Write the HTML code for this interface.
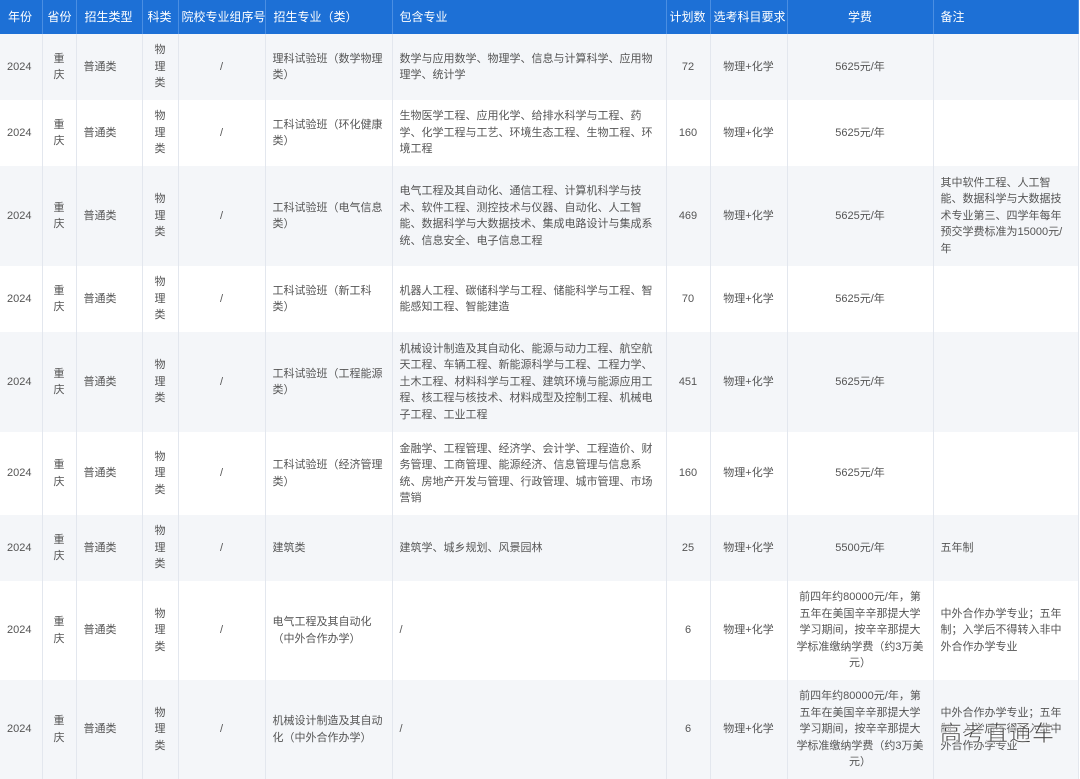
<!DOCTYPE html>
<html><head><meta charset="utf-8"><style>
html,body{margin:0;padding:0;background:#fff;width:1080px;height:771px;overflow:hidden}
body{font-family:"Liberation Sans","Noto Sans CJK SC",sans-serif;font-size:11px;color:#555}
table{border-collapse:collapse;table-layout:fixed;width:1078px;position:absolute;left:0;top:0}
td,th{border-right:1px solid #e3e7ee;padding:0 7px;line-height:16.5px;vertical-align:middle;overflow:hidden}
th{background:#1d70d6;color:#fff;font-weight:normal;font-size:12px;height:34px;text-align:left;border-right:1px solid #4a8ee2;white-space:nowrap}
tr.g td{background:#f4f6f9}
.c{text-align:center}
.wm{position:absolute;left:940px;top:716px;font-size:22px;color:#444;letter-spacing:1px;-webkit-text-stroke:0.5px #fff;text-shadow:0 0 2px #fff}
</style></head><body>
<table>
<colgroup><col style="width:42px"><col style="width:34px"><col style="width:66px"><col style="width:36px"><col style="width:87px"><col style="width:127px"><col style="width:274px"><col style="width:44px"><col style="width:77px"><col style="width:146px"><col style="width:145px"></colgroup>
<tr><th style="padding:0 0 0 8px">年份</th><th style="padding:0 0 0 5px">省份</th><th style="padding-left:8px">招生类型</th><th style="padding:0 0 0 5px">科类</th><th style="padding:0 3px">院校专业组序号</th><th style="padding-left:8px">招生专业（类）</th><th>包含专业</th><th style="padding:0 3px">计划数</th><th style="padding:0 3px">选考科目要求</th><th class="c">学费</th><th>备注</th></tr>
<tr class="g" style="height:66px"><td>2024</td><td class="c">重<br>庆</td><td>普通类</td><td class="c">物<br>理<br>类</td><td class="c">/</td><td>理科试验班（数学物理类）</td><td>数学与应用数学、物理学、信息与计算科学、应用物理学、统计学</td><td class="c">72</td><td class="c">物理+化学</td><td class="c">5625元/年</td><td></td></tr>
<tr style="height:66px"><td>2024</td><td class="c">重<br>庆</td><td>普通类</td><td class="c">物<br>理<br>类</td><td class="c">/</td><td>工科试验班（环化健康类）</td><td>生物医学工程、应用化学、给排水科学与工程、药学、化学工程与工艺、环境生态工程、生物工程、环境工程</td><td class="c">160</td><td class="c">物理+化学</td><td class="c">5625元/年</td><td></td></tr>
<tr class="g" style="height:100px"><td>2024</td><td class="c">重<br>庆</td><td>普通类</td><td class="c">物<br>理<br>类</td><td class="c">/</td><td>工科试验班（电气信息类）</td><td>电气工程及其自动化、通信工程、计算机科学与技术、软件工程、测控技术与仪器、自动化、人工智能、数据科学与大数据技术、集成电路设计与集成系统、信息安全、电子信息工程</td><td class="c">469</td><td class="c">物理+化学</td><td class="c">5625元/年</td><td>其中软件工程、人工智能、数据科学与大数据技术专业第三、四学年每年预交学费标准为15000元/年</td></tr>
<tr style="height:66px"><td>2024</td><td class="c">重<br>庆</td><td>普通类</td><td class="c">物<br>理<br>类</td><td class="c">/</td><td>工科试验班（新工科类）</td><td>机器人工程、碳储科学与工程、储能科学与工程、智能感知工程、智能建造</td><td class="c">70</td><td class="c">物理+化学</td><td class="c">5625元/年</td><td></td></tr>
<tr class="g" style="height:100px"><td>2024</td><td class="c">重<br>庆</td><td>普通类</td><td class="c">物<br>理<br>类</td><td class="c">/</td><td>工科试验班（工程能源类）</td><td>机械设计制造及其自动化、能源与动力工程、航空航天工程、车辆工程、新能源科学与工程、工程力学、土木工程、材料科学与工程、建筑环境与能源应用工程、核工程与核技术、材料成型及控制工程、机械电子工程、工业工程</td><td class="c">451</td><td class="c">物理+化学</td><td class="c">5625元/年</td><td></td></tr>
<tr style="height:83px"><td>2024</td><td class="c">重<br>庆</td><td>普通类</td><td class="c">物<br>理<br>类</td><td class="c">/</td><td>工科试验班（经济管理类）</td><td>金融学、工程管理、经济学、会计学、工程造价、财务管理、工商管理、能源经济、信息管理与信息系统、房地产开发与管理、行政管理、城市管理、市场营销</td><td class="c">160</td><td class="c">物理+化学</td><td class="c">5625元/年</td><td></td></tr>
<tr class="g" style="height:66px"><td>2024</td><td class="c">重<br>庆</td><td>普通类</td><td class="c">物<br>理<br>类</td><td class="c">/</td><td>建筑类</td><td>建筑学、城乡规划、风景园林</td><td class="c">25</td><td class="c">物理+化学</td><td class="c">5500元/年</td><td>五年制</td></tr>
<tr style="height:99px"><td>2024</td><td class="c">重<br>庆</td><td>普通类</td><td class="c">物<br>理<br>类</td><td class="c">/</td><td>电气工程及其自动化（中外合作办学）</td><td>/</td><td class="c">6</td><td class="c">物理+化学</td><td class="c">前四年约80000元/年，第五年在美国辛辛那提大学学习期间，按辛辛那提大学标准缴纳学费（约3万美元）</td><td>中外合作办学专业；五年制；入学后不得转入非中外合作办学专业</td></tr>
<tr class="g" style="height:99px"><td>2024</td><td class="c">重<br>庆</td><td>普通类</td><td class="c">物<br>理<br>类</td><td class="c">/</td><td>机械设计制造及其自动化（中外合作办学）</td><td>/</td><td class="c">6</td><td class="c">物理+化学</td><td class="c">前四年约80000元/年，第五年在美国辛辛那提大学学习期间，按辛辛那提大学标准缴纳学费（约3万美元）</td><td>中外合作办学专业；五年制；入学后不得转入非中外合作办学专业</td></tr>
</table>
<div class="wm">高考直通车</div>
</body></html>
